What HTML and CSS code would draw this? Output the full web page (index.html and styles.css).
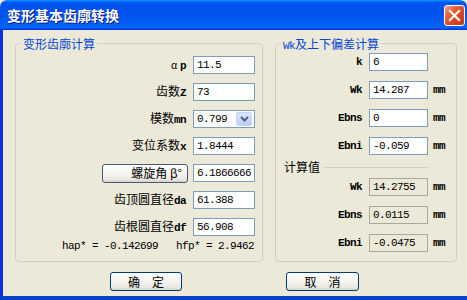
FILE: index.html
```html
<!DOCTYPE html>
<html lang="zh-CN">
<head>
    <meta charset="UTF-8">
    <title>变形基本齿廓转换</title>
    <link rel="stylesheet" href="styles.css">
</head>
<body>
    <div class="window">
        <div class="titlebar">
            <span class="title">变形基本齿廓转换</span>
            <button class="close" aria-label="关闭">
                <svg viewBox="0 0 19 19" width="19" height="19">
                    <path d="M5 5 L14 14 M14 5 L5 14" stroke="#fff" stroke-width="2.2" stroke-linecap="square"/>
                </svg>
            </button>
        </div>

        <div class="client">
            <div class="groups">
                <!-- 左侧：变形齿廓 -->
                <div class="group group-left">
                    <div class="group-title">变形齿廓计算</div>
                    <div class="form form-left">
                        <label><span class="greek">α</span> <span class="lat">p</span></label>
                        <input class="edit" value="11.5">

                        <label>齿数<span class="lat">Z</span></label>
                        <input class="edit" value="73">

                        <label>模数<span class="lat">mn</span></label>
                        <div class="combo">
                            <span class="combo-value">0.799</span>
                            <span class="combo-btn">
                                <svg viewBox="0 0 9 6" width="9" height="6">
                                    <path d="M1 1 L4.5 4.5 L8 1" fill="none" stroke="#4d6185" stroke-width="2"/>
                                </svg>
                            </span>
                        </div>

                        <label>变位系数<span class="lat">x</span></label>
                        <input class="edit" value="1.8444">

                        <button class="btn btn-beta">螺旋角 β°</button>
                        <input class="edit" value="6.1866666">

                        <label>齿顶圆直径<span class="lat">da</span></label>
                        <input class="edit" value="61.388">

                        <label>齿根圆直径<span class="lat">df</span></label>
                        <input class="edit" value="56.908">
                    </div>
                    <div class="coef">hap* = -0.142699   hfp* = 2.9462</div>
                </div>

                <!-- 右侧：公法线及偏差 -->
                <div class="group group-right">
                    <div class="group-title"><span class="lat">Wk</span>及上下偏差计算</div>
                    <div class="form form-right form-top">
                        <label class="lat">k</label>
                        <input class="edit" value="6">
                        <span></span>

                        <label class="lat">Wk</label>
                        <input class="edit" value="14.287">
                        <span class="unit">mm</span>

                        <label class="lat">Ebns</label>
                        <input class="edit" value="0">
                        <span class="unit">mm</span>

                        <label class="lat">Ebni</label>
                        <input class="edit" value="-0.059">
                        <span class="unit">mm</span>
                    </div>

                    <div class="divider"><span>计算值</span><i></i></div>

                    <div class="form form-right form-bottom">
                        <label class="lat">Wk</label>
                        <input class="edit edit-ro" value="14.2755" readonly>
                        <span class="unit">mm</span>

                        <label class="lat">Ebns</label>
                        <input class="edit edit-ro" value="0.0115" readonly>
                        <span class="unit">mm</span>

                        <label class="lat">Ebni</label>
                        <input class="edit edit-ro" value="-0.0475" readonly>
                        <span class="unit">mm</span>
                    </div>
                </div>
            </div>

            <div class="actions">
                <button class="btn btn-ok">确　定</button>
                <button class="btn btn-cancel">取　消</button>
            </div>
        </div>
    </div>
</body>
</html>
```

FILE: styles.css
```css
body {
    margin: 0;
    font-family: "Noto Sans CJK SC", sans-serif;
    font-size: 12px;
    line-height: 14px;
    color: #000;
    background: #ece9d8;
}
.window {
    width: 467px;
    height: 300px;
    display: flex;
    flex-direction: column;
}
.titlebar {
    height: 30px;
    flex: none;
    display: flex;
    align-items: flex-start;
    padding-left: 7px;
    box-sizing: border-box;
    border-radius: 7px 7px 0 0;
    background: linear-gradient(to bottom, #0997ff 0%, #0053ee 9%, #0050ee 40%, #0062f7 86%, #0066ff 92%, #003dd7 97%, #003dd7 100%);
}
.title {
    margin-top: 7px;
    color: #fff;
    font-size: 14px;
    font-weight: bold;
    line-height: 16px;
    text-shadow: 1px 1px 0 #0a1883;
}
.close {
    margin: 5px 2px 0 auto;
    width: 21px;
    height: 21px;
    padding: 0;
    border: 1px solid #fff;
    border-radius: 3px;
    background: linear-gradient(135deg, #f2a48c 0%, #e35d36 35%, #d4431f 70%, #c23a17 100%);
    display: flex;
    align-items: center;
    justify-content: center;
}
.client {
    flex: 1;
    border-left: 3px solid #0831d9;
    border-bottom: 4px solid #0842c6;
    padding: 13px 0 0 12px;
    background: #ece9d8;
}
.groups {
    display: flex;
    gap: 12px;
}
.group {
    height: 219px;
    box-sizing: border-box;
    border: 1px solid #d0d0bf;
    border-radius: 4px;
}
.group-left {
    width: 248px;
}
.group-right {
    width: 182px;
}
.group-title {
    width: max-content;
    height: 14px;
    margin: -7px 0 0 5px;
    padding: 0 2px;
    background: #ece9d8;
    color: #0046d5;
}
.lat {
    font-family: "Liberation Mono", monospace;
    font-size: 11px;
    letter-spacing: -0.6px;
}
.greek {
    font-size: 10px;
}
.form {
    display: grid;
    grid-auto-rows: 18px;
    align-items: center;
}
.form label {
    text-align: right;
    white-space: nowrap;
}
.form label.lat,
.form label .lat {
    font-weight: bold;
}
.form-left {
    grid-template-columns: 170px 62px;
    column-gap: 7px;
    row-gap: 9px;
    margin-top: 5px;
}
.form-right {
    grid-template-columns: 86px 59px auto;
    column-gap: 7px;
    row-gap: 10px;
}
.form-top {
    margin-top: 2px;
}
.form-bottom {
    margin-top: 4px;
}
.edit {
    width: 100%;
    height: 18px;
    box-sizing: border-box;
    margin: 0;
    border: 1px solid #7f9db9;
    padding: 0 3px;
    background: #fff;
    color: #000;
    font-family: "Liberation Mono", monospace;
    font-size: 11px;
    letter-spacing: -0.6px;
    outline: none;
}
.edit-ro {
    background: #ece9d8;
    border-color: #aca899;
}
.unit {
    margin-left: -2px;
    font-family: "Liberation Mono", monospace;
    font-size: 11px;
    font-weight: bold;
    letter-spacing: -0.6px;
}
.combo {
    height: 18px;
    box-sizing: border-box;
    border: 1px solid #7f9db9;
    background: #fff;
    padding: 1px 2px 1px 3px;
    display: flex;
    align-items: center;
}
.combo-value {
    flex: 1;
    font-family: "Liberation Mono", monospace;
    font-size: 11px;
    letter-spacing: -0.6px;
}
.combo-btn {
    width: 16px;
    height: 14px;
    box-sizing: border-box;
    border: 1px solid #c3d3fd;
    border-radius: 2px;
    background: linear-gradient(to bottom, #dce6fd, #b9cdfa);
    display: flex;
    align-items: center;
    justify-content: center;
}
.coef {
    margin-top: 3px;
    padding-left: 46px;
    white-space: pre;
    font-family: "Liberation Mono", monospace;
    font-size: 11px;
    letter-spacing: -0.6px;
}
.divider {
    height: 14px;
    margin: 5px 27px 0 8px;
    display: flex;
    align-items: center;
    gap: 3px;
}
.divider i {
    flex: 1;
    height: 1px;
    background: #d0d0bf;
}
.btn {
    height: 19px;
    box-sizing: border-box;
    padding: 0;
    border: 1px solid #003c74;
    border-radius: 3px;
    background: linear-gradient(to bottom, #ffffff 0%, #f5f4ef 50%, #e9e7df 85%, #d6d0c5 100%);
    font-family: "Noto Sans CJK SC", sans-serif;
    font-size: 12px;
    line-height: 14px;
    color: #000;
}
.btn-beta {
    justify-self: end;
    width: 86px;
    margin-right: -2px;
    padding-right: 5px;
    text-align: right;
    border-color: #4a5a70;
}
.actions {
    display: flex;
    margin-top: 10px;
}
.btn-ok {
    width: 72px;
    margin-left: 95px;
}
.btn-cancel {
    width: 73px;
    margin-left: 104px;
}
```
